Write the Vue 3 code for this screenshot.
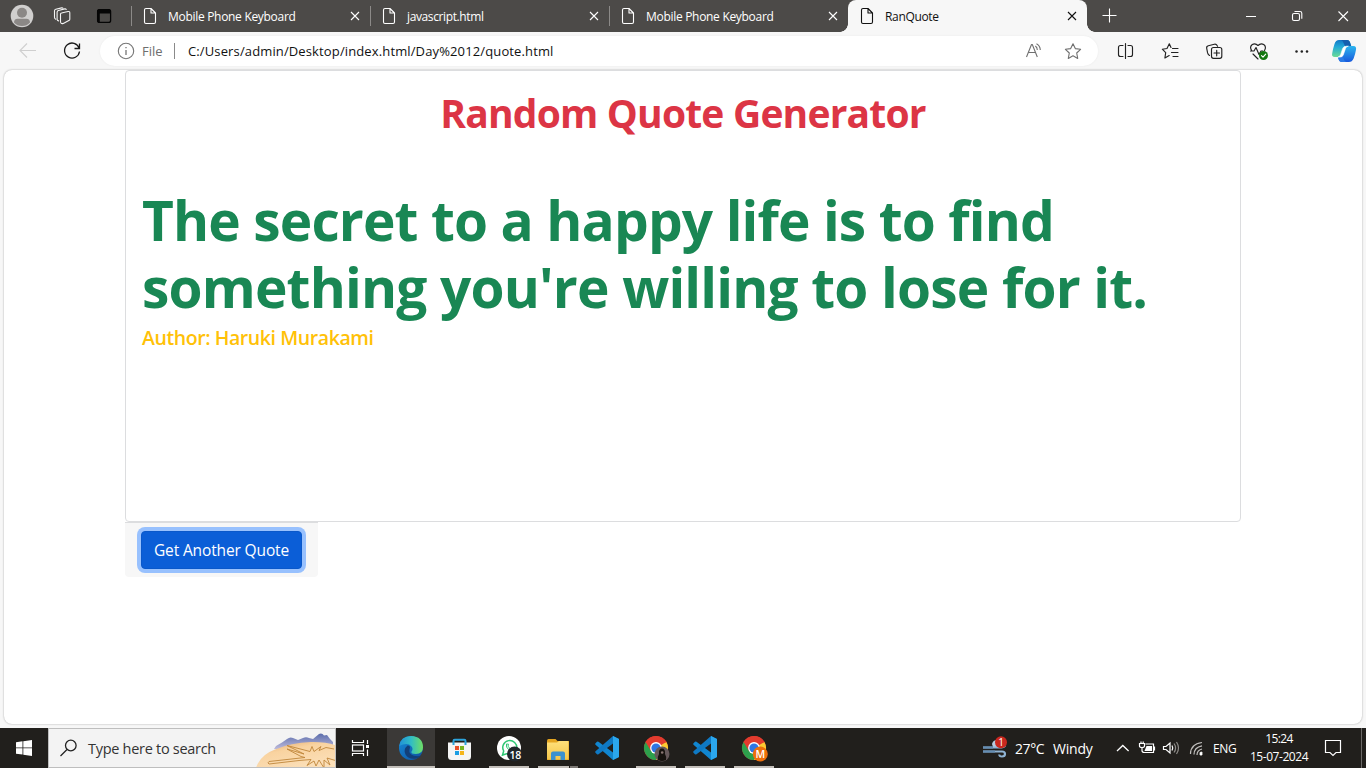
<script setup>
const tabs = [
  { title: 'Mobile Phone Keyboard', cls: 't-long' },
  { title: 'javascript.html', cls: 't-js' },
  { title: 'Mobile Phone Keyboard', cls: 't-long' },
  { title: 'RanQuote', cls: 't-ran', active: true },
]
</script>

<template>
  <div class="screen">
    <header class="tabbar">
      <svg width="131" height="32" viewBox="0 0 131 32" fill="none">
        <circle cx="22" cy="16" r="11.3" fill="#d0cfce" />
        <circle cx="22" cy="12.8" r="5" fill="#8b8886" />
        <path d="M14 22.5q0-3.8 3.6-3.8h8.8q3.6 0 3.6 3.8-3.2 3.6-8 3.6t-8-3.6z" fill="#8b8886" />
        <g stroke="#f4f4f4" stroke-width="1.1" stroke-linejoin="round" stroke-linecap="round">
          <path d="M60.5 14.2q0-1 1-1.2l6.5-1.5q1.7-.3 1.8 1.2v6.5q0 1-1 1.3l-5.5 2.9q-2.8.8-2.8-1.8z" />
          <path d="M58.6 20.9q-1.500-.4-1.500-2v-6.700q0-1.300 1.300-1.700l6.400-1.600q1-.2 1.400.5" />
          <path d="M55.8 19.2q-1.300-.5-1.300-2v-6.400q0-1.300 1.300-1.600l5.800-1.300q1-.2 1.400.4" />
        </g>
        <rect x="97.6" y="9.6" width="13" height="12.8" rx="2" stroke="#050505" stroke-width="1.3" />
        <path d="M97 13.500V11.500q0-2.500 2.500-2.500h9q2.500 0 2.500 2.500v2zM97 13h2.800v9.500H99q-2-.3-2-2.500z" fill="#050505" />
      </svg>
      <div v-for="(t, i) in tabs" :key="i" class="tab" :class="{ active: t.active }">
        <svg width="14" height="18" viewBox="0 0 14 18" fill="none" stroke="currentColor" stroke-width="1.1" stroke-linejoin="round">
          <path d="M1.500 3q0-1.500 1.500-1.500h5l4.500 4.500v9q0 1.500-1.500 1.500H3q-1.500 0-1.500-1.500zM8 1.500V6h4.500" />
        </svg>
        <span class="tab-title" :class="t.cls">{{ t.title }}</span>
        <svg width="10" height="10" viewBox="0 0 10 10" fill="none" stroke="currentColor" stroke-width="1.1"><path d="M1 1l8 8M9 1L1 9" /></svg>
      </div>
      <svg width="279" height="32" viewBox="1087 0 279 32" fill="none" stroke="#fff" stroke-width="1.1">
        <path d="M1102.500 15.500h14M1109.500 8.500v14M1246 16.500h10M1338.500 11.500l9.500 9.500M1348 11.500l-9.500 9.500" />
        <rect x="1292.500" y="13.500" width="7" height="7" rx="1.500" />
        <path d="M1294.500 11.500h5.500q1.800 0 1.800 1.800v5.400" />
      </svg>
    </header>

    <div class="toolbar">
      <svg width="100" height="38" viewBox="0 32 100 38" fill="none">
        <path d="M36 50.500H20.500M27 43.500l-7 7 7 7" stroke="#cfcfcf" stroke-width="1.100" />
        <path d="M79.200 48.200A7.500 7.500 0 1 0 79.500 51.500M79.500 43.500v5h-5" stroke="#1a1a1a" stroke-width="1.300" />
      </svg>
      <div class="address">
        <svg class="info" width="18" height="18" viewBox="0 0 18 18" fill="none" stroke="#767676" stroke-width="1.100">
          <circle cx="9" cy="9" r="7.700" /><path d="M9 8v5M9 5v1.300" stroke-width="1.300" />
        </svg>
        <span class="scheme">File</span>
        <span class="rule"></span>
        <span class="url">C:/Users/admin/Desktop/index.html/Day%2012/quote.html</span>
        <svg width="78" height="30" viewBox="1020 36 78 30" fill="none" stroke="#707070" stroke-width="1.100" stroke-linejoin="round">
          <path d="M1026.500 57l5-12.500h.8l5 12.500M1028.300 52.500h7.200M1035.300 46q2 1.200 2 4M1036.500 43.800q3.600 1.800 3.800 6.300" />
          <path d="M1073 43.700l2.300 4.900 5.300.7-3.900 3.700 1 5.400-4.700-2.600-4.700 2.600 1-5.400-3.900-3.700 5.300-.7z" />
        </svg>
      </div>
      <svg width="268" height="38" viewBox="1098 32 268 38" fill="none" stroke="#222" stroke-width="1.150" stroke-linejoin="round" stroke-linecap="round">
        <defs>
          <linearGradient id="cpA" x1="0" y1="0" x2="0" y2="1"><stop offset="0" stop-color="#1277c6" /><stop offset=".4" stop-color="#22a9d7" /><stop offset="1" stop-color="#6bdc96" /></linearGradient>
          <linearGradient id="cpB" x1="0" y1="0" x2="0" y2="1"><stop offset="0" stop-color="#2cb6ef" /><stop offset="1" stop-color="#1858dc" /></linearGradient>
        </defs>
        <path d="M1123 45.500h-2.500q-2 0-2 2v7q0 2 2 2h2.500M1128 45.500h2.500q2 0 2 2v7q0 2-2 2h-2.500M1125.500 43.500v15" />
        <path d="M1171 47.500l-1.700-3.700-2.300 4.700-4.700.7 3.400 3.500-.8 5.300 4.300-2.400M1172.500 48.500h5.500M1171.500 52.500h6.500M1173 56.500h5" />
        <path d="M1209.500 55.500q-1.500-.8-1.900-2.600l-.9-4.600q-.4-2 1.600-2.500l6-1.600q2-.4 2.800 1.300l.5.800" />
        <rect x="1211.500" y="47.500" width="10.300" height="10.800" rx="2" /><path d="M1216.700 50.300v5.500M1214 53h5.500" />
        <path d="M1252 51q-3-4 .3-6.500 3-1.800 5.700 1 2.700-2.800 5.700-1 3 2.200.8 6M1250.500 51h3.500l2-3.500 3 7 2-3.500h2M1253 54l5 5" />
        <circle cx="1263.500" cy="55.500" r="4.500" fill="#13770f" stroke="none" /><path d="M1261.500 55.700l1.500 1.500 2.700-3" stroke="#fff" />
        <g fill="#222" stroke="none"><circle cx="1296.500" cy="51.500" r="1.250" /><circle cx="1301.800" cy="51.500" r="1.250" /><circle cx="1307" cy="51.500" r="1.250" /></g>
        <g stroke="none">
          <path d="M1339 40h8q2.200 0 2.900 2l1.300 4h-3.200q-2.300 0-3 2.200l-2 6.300q-.8 2.500-3.200 2.500h-5q-3.500 0-2.600-3.800.5-3.500 2.300-9.200 1.200-4 4.500-4z" fill="url(#cpA)" />
          <path d="M1348 46h5.300q3.600 0 2.600 4.300-.5 3.300-2.300 8.200-1.500 3.600-4.700 3.600h-7q-2.300 0-3-2.100l-1-3h2q2.300 0 3-2.500l2-6.300q.8-2.200 3.100-2.200z" fill="url(#cpB)" />
          <path d="M1341 40h6q2.200 0 2.900 2l1.300 4h-3.200q-1.300 0-2 .8-1.500-.8-2.200-3.300-.8-3-2.800-3.500z" fill="#145fae" />
          <path d="M1339 62.100h2.900q-2.300 0-3-2.100l-1-3h2q1.500 0 2.400-1.400 1 1.200 1.500 3.400.8 3 2.500 3.100z" fill="#2a7be6" />
          <path d="M1348 46.200q-1.800.2-2.500 2.200l-2.200 6.500q-.8 2.200-3.300 2.200h-2q2-.4 2.700-2.600l2-6.100q.8-2.200 3.300-2.200z" fill="#fff" stroke="#fff" stroke-width=".6" />
        </g>
      </svg>
    </div>

    <main class="viewport">
      <div class="page">
        <section class="card">
          <h1>Random Quote Generator</h1>
          <p class="quote"><span class="q1">The secret to a happy life is to find</span><br /><span class="q2">something you're willing to lose for it.</span></p>
          <p class="author">Author: Haruki Murakami</p>
        </section>
        <div class="foot"><button>Get Another Quote</button></div>
      </div>
    </main>

    <footer class="taskbar">
      <svg width="48" height="40" viewBox="0 728 48 40" fill="#fff">
        <path d="M16 742.200l6.500-.9v6.200H16zM23.300 741.200l8.700-1.200v7.500h-8.700zM16 748.300h6.500v6.300l-6.500-.9zM23.300 748.300H32v7.700l-8.700-1.200z" />
      </svg>
      <div class="search">
        <svg width="39" height="38" viewBox="49 729 39 38" fill="none" stroke="#222" stroke-width="1.300"><circle cx="70.800" cy="745.500" r="5.300" /><path d="M67 749.500l-6.500 6.500" /></svg>
        <span class="hint">Type here to search</span>
        <svg width="80" height="38" viewBox="255 729 80 38">
          <defs>
            <linearGradient id="mt" x1="0" y1="0" x2="0" y2="1"><stop offset="0" stop-color="#5a6cac" /><stop offset="1" stop-color="#bcb9da" /></linearGradient>
            <linearGradient id="sand" x1="0" y1="0" x2=".6" y2="1"><stop offset="0" stop-color="#dfa468" /><stop offset=".4" stop-color="#f9d3a0" /><stop offset="1" stop-color="#fbdfb8" /></linearGradient>
          </defs>
          <path d="M276 746l6-3.500 5-3.500q3-2.500 6-1l5 2 5-2q3-1.500 6 0l4 1 6-5q3-1.500 5 1.500l3-.5 3 4 3 3v7h-59z" fill="url(#mt)" />
          <path d="M256 768q4-13 19-18.500 16-7 36-7.500 15-.2 24 3v23z" fill="url(#sand)" />
          <path d="M334 749l-8-1.500-7 3 2-4-7 5-2-5-2 5-23-6 17 8.500-17-5 14 7.500 4 1-36 4q-2 1.500 0 2.500l30-3.500 12-1-4 6 7-4.500 2 5 3-6 5 8 0-8 6 5-3-7 10 3" fill="none" stroke="#c0863a" stroke-width=".9" stroke-linejoin="round" />
        </svg>
      </div>
      <svg width="51" height="40" viewBox="336 728 51 40" fill="none" stroke="#fff" stroke-width="1.200">
        <path d="M352.500 740v2.500h11V740M352.500 756v-2.500h11V756M367.500 740v4M367.500 749.500v6.500" /><rect x="352.500" y="745" width="11" height="6" /><rect x="366" y="745" width="3" height="3" fill="#fff" stroke="none" />
      </svg>
      <svg width="393" height="40" viewBox="387 728 393 40" fill="none">
        <defs>
          <linearGradient id="eg" x1="0" y1="0" x2="1" y2="0"><stop offset="0" stop-color="#2190d8" /><stop offset=".5" stop-color="#31bdc4" /><stop offset="1" stop-color="#70df63" /></linearGradient>
          <linearGradient id="eb" x1="0" y1="0" x2="1" y2="1"><stop offset="0" stop-color="#168bd8" /><stop offset="1" stop-color="#0f4f9f" /></linearGradient>
          <linearGradient id="fy" x1="0" y1="0" x2="0" y2="1"><stop offset="0" stop-color="#ffe07a" /><stop offset="1" stop-color="#f5c64b" /></linearGradient>
          <g id="chrome">
            <circle r="12" fill="#e33b2e" />
            <path d="M0 0L-10.400-6A12 12 0 0 0 0 12L5.200 3z" fill="#2da04c" />
            <path d="M0 0L10.400-6A12 12 0 0 1 0 12L5.200 3z" fill="#fccb31" />
            <path d="M0-5.800H10.500L10.400-6A12 12 0 0 0-10.400-6L-5 3z" fill="#e33b2e" />
            <circle r="5.900" fill="#fff" /><circle r="4.600" fill="#2f76e4" />
          </g>
          <g id="code">
            <path d="M6-12l6 3V9l-6 3L-11.500-3.200q-.8-.8 0-1.600l1.500-1.400q.8-.6 1.500 0L6 4.500z" fill="#1186d0" />
            <path d="M6-12v7.500L-8.500 6.200q-.8.600-1.500 0l-1.500-1.400q-.8-.8 0-1.600z" fill="#0f79c4" />
            <path d="M6-12l6 3V9l-6 3z" fill="#2ba7ee" />
          </g>
        </defs>
        <rect x="387" y="728" width="48" height="40" fill="#3b3937" />
        <circle cx="411" cy="748" r="12" fill="url(#eb)" />
        <path d="M399.200 746q1.500-10 11.800-10 12 .5 12 11.500 0 6.500-7.200 6.500-5.300 0-4.300-2.500 2-2.500 0-5-4-4.500-12.300-.5z" fill="url(#eg)" />
        <path d="M407.500 745.500q-4.500 4-2 9 3.500 5.500 11 4 3-.8 5-3-3.500 1.200-7.500.2-5.500-1.600-4.500-6.200 1-2.500 0-3.500-1-.8-2-.5z" fill="#123f79" />
        <path d="M448 742.500h23v14q0 3.500-3.500 3.500h-16q-3.500 0-3.500-3.500z" fill="#f5f5f5" />
        <path d="M453.500 745v-4q0-1.200 1.200-1.200h9.600q1.200 0 1.200 1.200v4" stroke="#2da4dc" stroke-width="2" />
        <path d="M455 746h4v4h-4z" fill="#e9502b" /><path d="M460 746h4v4h-4z" fill="#7ab51d" /><path d="M455 751h4v4h-4z" fill="#1c9ee4" /><path d="M460 751h4v4h-4z" fill="#f5b51a" />
        <circle cx="509" cy="748" r="12" fill="#fff" />
        <path d="M502.500 755l1.200-4a7 7 0 1 1 2.800 2.700z" stroke="#2fc774" stroke-width="1.500" /><path d="M506.500 744q-1 3 2 5.500t5 1l-1-2-2 .7-2.500-3 .5-2z" stroke="#2fc774" />
        <circle cx="514.500" cy="754" r="7.500" fill="#20262b" />
        <path d="M547 741q0-2 1.500-2h7l2 2H569v19h-22z" fill="#e5a520" /><path d="M547 742.500h10l2-1.500h8.500q1 0 1 1V758q0 1.500-1.500 1.500h-18.500q-1.500 0-1.500-1.500z" fill="url(#fy)" />
        <path d="M551 760v-6.500q0-2 2-2h10q2 0 2 2v6.500h-4.500V756h-5v4z" fill="#3b91cf" />
        <use href="#code" x="607" y="748" /><use href="#code" x="705" y="748" />
        <use href="#chrome" x="656" y="748" /><use href="#chrome" x="754" y="748" />
        <circle cx="662" cy="754" r="7.500" fill="#66595a" /><path d="M658 760q-.5-4 1-6-.5-5.500 3-5.500t3 5.500q1.500 2 1 6-4 2-8 0z" fill="#17130f" /><circle cx="662.200" cy="752.500" r="1.300" fill="#8b7773" />
        <circle cx="760.300" cy="754" r="7.500" fill="#ed6f0c" />
        <g fill="#c3bfba"><rect x="387" y="766" width="48" height="2" /><rect x="489" y="766" width="40" height="2" /><rect x="538" y="766" width="31" height="2" /><rect x="636" y="766" width="40" height="2" /><rect x="685" y="766" width="40" height="2" /><rect x="734" y="766" width="40" height="2" /></g>
        <rect x="570" y="766" width="8" height="2" fill="#7d7975" />
        <text x="515.200" y="758.500" class="badge" text-anchor="middle">18</text>
        <text x="760.300" y="758" class="badge" text-anchor="middle">M</text>
      </svg>
      <div class="tray">
        <svg width="32" height="40" viewBox="980 728 32 40" fill="none">
          <path d="M992 744q1-4 5-4 4 1 5 4v3h-9z" fill="#b7cce0" />
          <path d="M983 747.500h16q5 0 6-2M983 751.500h19q3 0 3 2.500t-3 2.500-2.500-2" stroke="#8fb3d4" stroke-width="2.200" /><path d="M983 747.500h10M983 751.500h12" stroke="#648db3" stroke-width="2.200" />
          <circle cx="1001" cy="742.300" r="6" fill="#c9281f" /><text x="1001" y="746" class="alert" text-anchor="middle">1</text>
        </svg>
        <span class="temp">27°C</span><span class="windy">Windy</span>
        <svg width="100" height="40" viewBox="1110 728 100 40" fill="none" stroke="#fff" stroke-width="1.200">
          <path d="M1117 751l5.800-5.500 5.800 5.500" stroke-width="1.300" />
          <path d="M1145.500 744h8v8.500h-9.500M1154.500 746.500v4M1139.500 743.500h5v2.500q0 1.500-2.500 1.500t-2.500-1.500zM1141 741.500v2M1143.200 741.500v2M1142 747.500v3q0 2 2.500 2" /><path d="M1146.500 746h5.500v5h-7.500z" fill="#fff" stroke="none" />
          <path d="M1163.500 746.500h2.500l4-3.500v10l-4-3.500h-2.500z" /><path d="M1172 745.500q1.500 2.500 0 5" /><path d="M1174 743.500q3.200 4.500 0 9M1176.500 742q4 6 0 12" stroke="#8e8c89" />
          <path d="M1190.500 754q0-10 11.500-11.500M1194 754.500q0-7.200 8-8.700M1197 755q0-4.700 5-6" stroke="#c2c0be" /><path d="M1200 755v-2.500l2-.5v3z" fill="#fff" stroke-width=".8" />
        </svg>
        <span class="lang">ENG</span>
        <div class="clock"><span class="time">15:24</span><span class="date">15-07-2024</span></div>
        <svg width="40" height="40" viewBox="1313 728 40 40" fill="none" stroke="#fff" stroke-width="1.200"><path d="M1325.500 740.500h15v12h-4.500l-3 3-3-3h-4.500z" /></svg>
        <span class="peek"></span>
      </div>
    </footer>
  </div>
</template>

<style>
html, body { margin: 0; overflow: hidden; }
</style>

<style scoped>
.screen { width: 1366px; height: 768px; display: flex; flex-direction: column; background: #f7f7f7; font-family: "Open Sans", "Noto Sans", sans-serif; color: #111; overflow: hidden; white-space: nowrap; }
.screen svg { display: block; flex: none; }
.tabbar { height: 32px; flex: none; display: flex; background: #4c4a48; color: #fff; }
.tab { position: relative; box-sizing: border-box; width: 239px; height: 32px; display: flex; align-items: center; padding: 0 10px 0 12px; font-size: 12px; }
.tab:not(.active)::before { content: ""; position: absolute; left: 0; top: 6px; width: 1px; height: 20px; background: #8c8a88; }
.tab-title { margin-left: 11px; flex: 1; }
.t-long { letter-spacing: -.3px; }
.t-js { letter-spacing: -.38px; }
.t-ran { letter-spacing: -.33px; }
.tab.active { background: #f7f7f7; color: #111; border-radius: 8px 8px 0 0; }
.tab.active::before, .tab.active::after { content: ""; position: absolute; bottom: 0; width: 8px; height: 8px; }
.tab.active::before { left: -8px; background: radial-gradient(circle at 0 0, transparent 7.5px, #f7f7f7 8px); }
.tab.active::after { right: -8px; background: radial-gradient(circle at 100% 0, transparent 7.5px, #f7f7f7 8px); }
.toolbar { height: 38px; flex: none; display: flex; align-items: center; }
.address { width: 998px; height: 30px; border-radius: 15px; background: #fff; box-shadow: 0 0 2px #e8e8e8; display: flex; align-items: center; font-size: 13px; }
.info { margin-left: 17px; }
.scheme { width: 32px; margin-left: 7px; color: #6e6e6e; }
.rule { width: 1px; height: 16px; background: #8a8a8a; }
.url { margin-left: 13px; flex: 1; letter-spacing: .13px; }
.viewport { box-sizing: border-box; width: 1358px; height: 654px; margin-left: 4px; border-radius: 8px; background: #fff; box-shadow: 0 0 2px rgba(0, 0, 0, .35); flex: none; }
.page { width: 1116px; margin-left: 121px; }
.card { box-sizing: border-box; height: 452px; border: 1px solid #dcdddf; border-radius: 4px; padding: 18px 16px; }
h1 { margin: 0; height: 48px; font-size: 39px; line-height: 48px; font-weight: 700; letter-spacing: -.8px; text-align: center; color: #dc3545; }
.quote { margin: 49px 0 0; font-size: 55px; line-height: 67px; font-weight: 700; color: #198754; }
.q1 { letter-spacing: -.87px; }
.q2 { letter-spacing: -.82px; }
.author { margin: 6px 0 0; font-size: 19.5px; line-height: 24px; font-weight: 600; letter-spacing: -.42px; color: #ffc107; }
.foot { box-sizing: border-box; width: 193px; height: 55px; padding: 8px 0 0 16px; background: #f7f7f7; border-top: 1px solid #dcdddf; border-radius: 0 0 4px 4px; }
button { box-sizing: border-box; display: block; width: 161px; height: 38px; padding: 0; border: 1px solid #0a58ca; border-radius: 4px; background: #0b5ed7; color: #fff; font: 15.5px/36px "Open Sans", sans-serif; letter-spacing: -.13px; box-shadow: 0 0 0 4px #98c1fe; }
.taskbar { height: 40px; flex: none; margin-top: 4px; display: flex; background: #211f1c; color: #fff; }
.search { box-sizing: border-box; width: 288px; height: 40px; border: 1px solid #bebebe; background: #f3f3f3; display: flex; align-items: center; color: #333; font-size: 14.5px; }
.hint { flex: 1; letter-spacing: -.29px; }
.badge { font: 600 10.5px "Open Sans", sans-serif; letter-spacing: -.3px; fill: #fff; }
.alert { font: 10px "Open Sans", sans-serif; fill: #fff; }
.tray { margin-left: 200px; display: flex; align-items: center; font-size: 14px; }
.temp { width: 38px; margin-left: 3px; letter-spacing: -.4px; }
.windy { width: 57px; letter-spacing: -.2px; }
.lang { width: 32px; margin-left: 3px; font-size: 12px; letter-spacing: -.4px; }
.clock { width: 68px; display: flex; flex-direction: column; align-items: center; font-size: 12px; line-height: 18px; }
.time { letter-spacing: -.65px; }
.date { letter-spacing: -.45px; }
.peek { width: 1px; height: 40px; background: #6b6967; margin-left: 8px; }
</style>
